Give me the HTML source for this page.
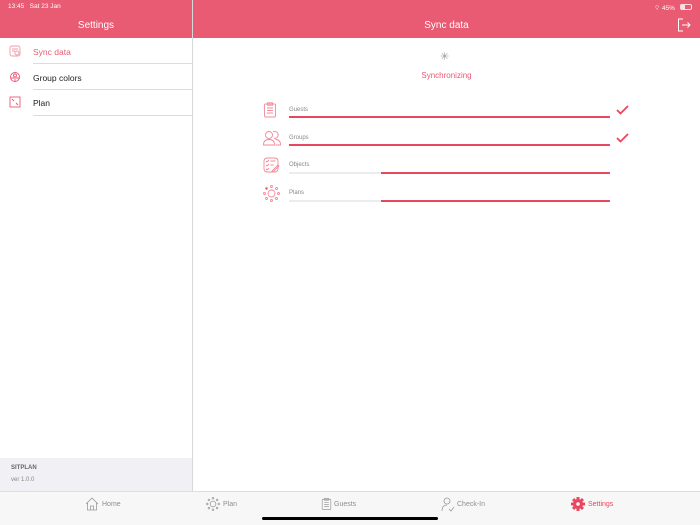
<!DOCTYPE html>
<html><head><style>
*{margin:0;padding:0;box-sizing:border-box}
body{width:700px;height:525px;position:relative;overflow:hidden;font-family:"Liberation Sans",sans-serif;background:#fff}
.a{position:absolute}
.hdr{left:0;top:0;width:700px;height:38px;background:#e95a73}
.t{color:#fff;font-size:10px}
.sep{height:1px;background:#dcdcdc}
.lbl{font-size:8.5px;color:#222}
.bar{height:2px;background:#e8475f}
.gbar{height:2px;background:#ececf0}
.pl{font-size:6px;color:#888}
.tab{font-size:7px;color:#8e8e93}
</style></head><body>
<div class="a hdr"></div>
<div class="a" style="left:192px;top:0;width:1px;height:491px;background:#d8d8d8"></div>
<div class="a t" style="left:8px;top:3px;font-size:6.5px">13:45&nbsp;&nbsp; Sat 23 Jan</div>
<div class="a t" style="left:654px;top:3px;font-size:6.5px">⌔ 45%</div>
<div class="a" style="left:680px;top:4px;width:12px;height:6px;border:1px solid #fff;border-radius:2px;opacity:.8"><div style="width:4px;height:4px;background:#fff"></div></div>
<div class="a t" style="left:0;width:192px;top:20px;text-align:center;font-size:10px">Settings</div>
<div class="a t" style="left:193px;width:507px;top:20px;text-align:center;font-size:10px">Sync data</div>
<svg class="a" style="left:677px;top:18px" width="14" height="14" viewBox="0 0 14 14" fill="none" stroke="#fff" stroke-width="1"><path d="M6 1H1.5v12H6M5 7h8M10.5 4.5L13 7l-2.5 2.5"/></svg>

<svg class="a" style="left:9px;top:45px" width="12" height="12" viewBox="0 0 12 12" fill="none" stroke="#f19aa8" stroke-width="0.9"><rect x="1" y="1" width="10" height="10" rx="2"/><path d="M3 4h6M3 6h3"/><circle cx="8" cy="8" r="2"/></svg>
<div class="a lbl" style="left:33px;top:47px;color:#e95a73">Sync data</div>
<div class="a sep" style="left:33px;top:63px;width:159px"></div>
<svg class="a" style="left:9px;top:71px" width="12" height="12" viewBox="0 0 12 12" fill="none" stroke="#e95a73" stroke-width="0.9"><circle cx="6" cy="6" r="4.5"/><circle cx="6" cy="4.5" r="1.5"/><path d="M2 7l3 0M10 7l-3 0M6 6v4"/></svg>
<div class="a lbl" style="left:33px;top:73px">Group colors</div>
<div class="a sep" style="left:33px;top:89px;width:159px"></div>
<svg class="a" style="left:9px;top:96px" width="12" height="12" viewBox="0 0 12 12" fill="none" stroke="#e95a73" stroke-width="0.9"><rect x="1" y="1" width="10" height="10"/><path d="M3 3l2 2M9 9l-2-2"/></svg>
<div class="a lbl" style="left:33px;top:98px">Plan</div>
<div class="a sep" style="left:33px;top:115px;width:159px"></div>

<div class="a" style="left:0;top:458px;width:192px;height:33px;background:#f1f1f5"></div>
<div class="a" style="left:11px;top:465px;font-size:6px;color:#666;font-weight:bold">SITPLAN</div>
<div class="a" style="left:11px;top:477px;font-size:6px;color:#888">ver 1.0.0</div>

<div class="a" style="left:440px;top:50px;color:#999;font-size:11px">✳</div>
<div class="a" style="left:193px;width:507px;top:71px;text-align:center;font-size:8px;color:#e95a73">Synchronizing</div>

<svg class="a" style="left:263px;top:102px" width="14" height="16" viewBox="0 0 14 16" fill="none" stroke="#f08a9c" stroke-width="0.9"><rect x="1.5" y="2" width="11" height="13" rx="1"/><rect x="4.5" y="0.8" width="5" height="2.4"/><path d="M4 6h6M4 8.5h6M4 11h6"/></svg>
<div class="a pl" style="left:289px;top:107px">Guests</div>
<div class="a bar" style="left:289px;top:116px;width:321px"></div>
<svg class="a" style="left:616px;top:105px" width="13" height="10" viewBox="0 0 13 10" fill="none" stroke="#e8475f" stroke-width="1.8"><path d="M1 5l3.5 3.5L12 1"/></svg>

<svg class="a" style="left:263px;top:130px" width="18" height="16" viewBox="0 0 18 16" fill="none" stroke="#f08a9c" stroke-width="0.9"><circle cx="6" cy="5" r="3.5"/><path d="M0.5 15c0-4 2.5-5.5 5.5-5.5s5.5 1.5 5.5 5.5z"/><path d="M10 1.8a3.5 3.5 0 1 1 1 6.5M12.5 9.5c3 0 5 1.5 5 5.5h-5"/></svg>
<div class="a pl" style="left:289px;top:135px">Groups</div>
<div class="a bar" style="left:289px;top:144px;width:321px"></div>
<svg class="a" style="left:616px;top:133px" width="13" height="10" viewBox="0 0 13 10" fill="none" stroke="#e8475f" stroke-width="1.8"><path d="M1 5l3.5 3.5L12 1"/></svg>

<svg class="a" style="left:263px;top:157px" width="17" height="16" viewBox="0 0 17 16" fill="none" stroke="#f08a9c" stroke-width="0.9"><rect x="1" y="1" width="14" height="14" rx="3"/><path d="M3 4l1 1 2-2M3 8l1 1 2-2M3 12l1 1 2-2M7.5 4h5M7.5 8h3M9 14l6-6 1 1-6 6z"/></svg>
<div class="a pl" style="left:289px;top:162px">Objects</div>
<div class="a gbar" style="left:289px;top:172px;width:92px"></div>
<div class="a bar" style="left:381px;top:172px;width:229px"></div>

<svg class="a" style="left:263px;top:185px" width="17" height="17" viewBox="0 0 17 17" fill="none" stroke="#f08a9c" stroke-width="0.9"><circle cx="8.5" cy="8.5" r="3.5"/><circle cx="8.5" cy="1.5" r="1"/><circle cx="8.5" cy="15.5" r="1"/><circle cx="1.5" cy="8.5" r="1"/><circle cx="15.5" cy="8.5" r="1"/><circle cx="3.5" cy="3.5" r="1" fill="#e8475f"/><circle cx="13.5" cy="3.5" r="1"/><circle cx="3.5" cy="13.5" r="1"/><circle cx="13.5" cy="13.5" r="1"/></svg>
<div class="a pl" style="left:289px;top:190px">Plans</div>
<div class="a gbar" style="left:289px;top:200px;width:92px"></div>
<div class="a bar" style="left:381px;top:200px;width:229px"></div>

<div class="a" style="left:0;top:491px;width:700px;height:34px;background:#f7f7f7;border-top:1px solid #dedede"></div>
<svg class="a" style="left:85px;top:497px" width="14" height="14" viewBox="0 0 14 14" fill="none" stroke="#999" stroke-width="0.8"><path d="M1 7L7 1l6 6M2.5 5.5V13h9V5.5M5.5 13V9h3v4"/></svg>
<div class="a tab" style="left:102px;top:501px">Home</div>
<svg class="a" style="left:206px;top:497px" width="14" height="14" viewBox="0 0 17 17" fill="none" stroke="#999" stroke-width="0.9"><circle cx="8.5" cy="8.5" r="3.5"/><circle cx="8.5" cy="1.5" r="1"/><circle cx="8.5" cy="15.5" r="1"/><circle cx="1.5" cy="8.5" r="1"/><circle cx="15.5" cy="8.5" r="1"/><circle cx="3.5" cy="3.5" r="1"/><circle cx="13.5" cy="3.5" r="1"/><circle cx="3.5" cy="13.5" r="1"/><circle cx="13.5" cy="13.5" r="1"/></svg>
<div class="a tab" style="left:223px;top:501px">Plan</div>
<svg class="a" style="left:321px;top:497px" width="11" height="14" viewBox="0 0 14 16" fill="none" stroke="#999" stroke-width="0.9"><rect x="1.5" y="2" width="11" height="13" rx="1"/><rect x="4.5" y="0.8" width="5" height="2.4"/><path d="M4 6h6M4 8.5h6M4 11h6"/></svg>
<div class="a tab" style="left:334px;top:501px">Guests</div>
<svg class="a" style="left:441px;top:497px" width="14" height="15" viewBox="0 0 14 15" fill="none" stroke="#999" stroke-width="0.8"><circle cx="6" cy="4" r="3"/><path d="M1 14c0-4 2-6 5-6M8 12l2 2 3-4"/></svg>
<div class="a tab" style="left:457px;top:501px">Check-In</div>
<svg class="a" style="left:571px;top:497px" width="14" height="14" viewBox="0 0 14 14"><g fill="#e8475f"><circle cx="7" cy="7" r="5"/><rect x="5.5" y="0" width="3" height="14"/><rect x="0" y="5.5" width="14" height="3"/><rect x="5.5" y="0" width="3" height="14" transform="rotate(45 7 7)"/><rect x="5.5" y="0" width="3" height="14" transform="rotate(-45 7 7)"/></g><circle cx="7" cy="7" r="1.8" fill="#f7f7f7"/></svg>
<div class="a tab" style="left:588px;top:501px;color:#e8475f">Settings</div>
<div class="a" style="left:262px;top:517px;width:176px;height:3px;border-radius:2px;background:#000"></div>
</body></html>
